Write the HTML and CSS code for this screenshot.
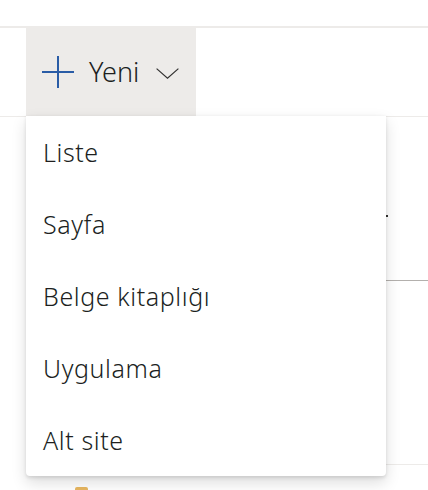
FILE: index.html
```html
<!DOCTYPE html>
<html lang="tr">
<head>
<meta charset="utf-8">
<link rel="stylesheet" href="styles.css">
</head>
<body>
<div class="page">
  <div class="top-space"></div>
  <div class="command-bar">
    <button class="new-btn" type="button">
      <svg class="plus" width="32" height="32" viewBox="0 0 32 32"><path d="M16 0V32M0 16H32" stroke="#2a5ca6" stroke-width="2" fill="none"/></svg>
      <span class="new-label">Yeni</span>
      <svg class="chev" width="23" height="11" viewBox="0 0 23 11"><path d="M0.6 0.6L11.5 10.2L22.4 0.6" stroke="#323130" stroke-width="1.2" fill="none"/></svg>
    </button>
  </div>
  <div class="list">
    <div class="row row-head"><span class="peek"></span></div>
    <div class="row row-item"></div>
    <div class="row row-last"><span class="folder"></span></div>
  </div>
  <ul class="menu">
    <li class="menu-item">Liste</li>
    <li class="menu-item">Sayfa</li>
    <li class="menu-item">Belge kitaplığı</li>
    <li class="menu-item">Uygulama</li>
    <li class="menu-item">Alt site</li>
  </ul>
</div>
</body>
</html>
```

FILE: styles.css
```css
* { box-sizing: border-box; }
html, body { margin: 0; padding: 0; background: #ffffff; }
body { font-family: "Noto Sans", "Open Sans", sans-serif; font-weight: 300; color: #201f1e; overflow: hidden; }
.page { position: relative; width: 428px; height: 490px; overflow: hidden; }
.top-space { height: 26px; }
.command-bar {
  height: 91px;
  border-top: 2px solid #edebe9;
  border-bottom: 1px solid #edebe9;
  padding-left: 26px;
  display: flex;
}
.new-btn {
  height: 88px;
  width: 170px;
  background: #edebe9;
  border: none;
  margin: 0;
  padding: 0 0 0 16px;
  display: flex;
  align-items: center;
  font-family: inherit;
  font-weight: 300;
  color: #201f1e;
  cursor: pointer;
}
.plus { flex: none; display: block; }
.new-label {
  font-size: 27px;
  line-height: 1;
  margin-left: 15px;
  margin-top: -2px;
}
.chev { flex: none; display: block; margin-left: 17px; margin-top: 2px; }
.list { display: flex; flex-direction: column; margin-left: 26px; }
.row-head {
  height: 164px;
  border-bottom: 1px solid #b3b0ad;
}
.peek {
  display: block;
  width: 3px;
  height: 2px;
  background: #323130;
  margin: 98px 0 0 359px;
}
.row-item {
  height: 184px;
  border-bottom: 1px solid #edebe9;
}
.row-last { height: 40px; }
.folder {
  display: block;
  width: 13px;
  height: 8px;
  margin: 22px 0 0 49px;
  background: #e8b760;
  border-radius: 2px 2px 0 0;
}
.menu {
  position: absolute;
  left: 26px;
  top: 116px;
  width: 360px;
  margin: 0;
  padding: 0;
  list-style: none;
  background: #ffffff;
  border-radius: 0 0 4px 4px;
  box-shadow: 0 6.4px 14.4px rgba(0,0,0,0.132), 0 1.2px 3.6px rgba(0,0,0,0.108);
}
.menu-item {
  height: 72px;
  padding: 0 17px;
  font-size: 25px;
  letter-spacing: 0.6px;
  line-height: 72px;
  white-space: nowrap;
}
```
